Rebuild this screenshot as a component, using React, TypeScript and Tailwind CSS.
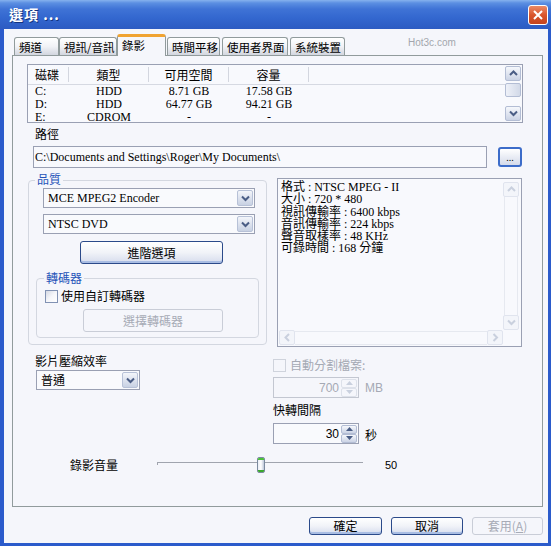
import type { ReactNode } from 'react';

const serif = "font-['Liberation_Serif','Noto_Sans_CJK_TC',serif]";
const cjk = "font-['Noto_Sans_CJK_TC','Liberation_Sans',sans-serif]";
const sans = "font-['Liberation_Sans','Noto_Sans_CJK_TC',sans-serif]";

type Dir = 'up' | 'down' | 'left' | 'right';

function Arrow({ dir, color = '#4a5d85' }: { dir: Dir; color?: string }) {
  const vert = dir === 'up' || dir === 'down';
  const d = {
    up: 'M1 5 L4.5 1.5 L8 5',
    down: 'M1 1.5 L4.5 5 L8 1.5',
    left: 'M5 1 L1.5 4.5 L5 8',
    right: 'M1.5 1 L5 4.5 L1.5 8',
  }[dir];
  return (
    <svg width={vert ? 9 : 7} height={vert ? 7 : 9} viewBox={vert ? '0 0 9 7' : '0 0 7 9'}>
      <path d={d} fill="none" stroke={color} strokeWidth="2" />
    </svg>
  );
}

function ScrollButton({ dir, disabled }: { dir: Dir; disabled?: boolean }) {
  return (
    <div
      className={
        disabled
          ? 'flex h-[15px] w-[16px] items-center justify-center rounded-[2px] border border-[#e0e4ee] bg-[#f3f5fa]'
          : 'flex h-[15px] w-[16px] items-center justify-center rounded-[2px] border border-[#b3bdd4] bg-gradient-to-b from-[#f6f8fc] to-[#cbd3e5]'
      }
    >
      <Arrow dir={dir} color={disabled ? '#c9d0de' : '#4a5d85'} />
    </div>
  );
}

function Combo({ value, width }: { value: string; width: string }) {
  return (
    <div className={`flex h-[20px] items-center border border-[#9aa0b3] bg-[#f9fafd] ${width}`}>
      <span className="flex-1 whitespace-nowrap pl-[4px] leading-[14px]">{value}</span>
      <div className="mr-px flex h-[16px] w-[16px] items-center justify-center rounded-[2px] border border-[#b7c1d7] bg-gradient-to-b from-[#f3f5fa] to-[#c8d1e3]">
        <Arrow dir="down" />
      </div>
    </div>
  );
}

function Spin({ value, disabled }: { value: string; disabled?: boolean }) {
  return (
    <div
      className={
        disabled
          ? 'flex h-[21px] w-[86px] items-center border border-[#c3c7d1] bg-[#f5f6fb]'
          : 'flex h-[21px] w-[86px] items-center border border-[#9aa0b3] bg-[#f9fafd]'
      }
    >
      <span
        className={`flex-1 pr-[2px] text-right text-[12px] leading-[14px] ${sans} ${disabled ? 'text-[#a5a9b4]' : 'text-black'}`}
      >
        {value}
      </span>
      <div className="mr-px flex flex-col">
        <div
          className={
            disabled
              ? 'flex h-[9px] w-[16px] items-center justify-center rounded-[2px] border border-[#dde1ea]'
              : 'flex h-[9px] w-[16px] items-center justify-center rounded-[2px] border border-[#b3bdd4] bg-gradient-to-b from-[#f6f8fc] to-[#cbd3e5]'
          }
        >
          <svg width="7" height="4" viewBox="0 0 7 4">
            <path d="M0 4 L3.5 0 L7 4 Z" fill={disabled ? '#c9d0de' : '#4a5d85'} />
          </svg>
        </div>
        <div
          className={
            disabled
              ? 'flex h-[9px] w-[16px] items-center justify-center rounded-[2px] border border-[#dde1ea]'
              : 'flex h-[9px] w-[16px] items-center justify-center rounded-[2px] border border-[#b3bdd4] bg-gradient-to-b from-[#f6f8fc] to-[#cbd3e5]'
          }
        >
          <svg width="7" height="4" viewBox="0 0 7 4">
            <path d="M0 0 L3.5 4 L7 0 Z" fill={disabled ? '#c9d0de' : '#4a5d85'} />
          </svg>
        </div>
      </div>
    </div>
  );
}

function Button({ children, className, disabled }: { children: ReactNode; className: string; disabled?: boolean }) {
  return (
    <div
      className={
        disabled
          ? `flex items-center justify-center rounded-[3px] border border-[#c9cdd7] ${cjk} text-[12px] text-[#a7abb6] ${className}`
          : `flex items-center justify-center rounded-[3px] border border-[#2b4a8a] bg-gradient-to-b from-[#ffffff] via-[#f1f3f8] to-[#d6dced] shadow-[inset_0_-2px_0_#a9bde3] ${cjk} text-[12px] text-black ${className}`
      }
    >
      {children}
    </div>
  );
}

function Checkbox({ disabled }: { disabled?: boolean }) {
  return (
    <div
      className={
        disabled
          ? 'h-[13px] w-[13px] border border-[#cfd3dc]'
          : 'h-[13px] w-[13px] border border-[#8192b3] bg-gradient-to-br from-[#d5d9e3] via-[#f5f6fa] to-white'
      }
    />
  );
}

const tabs = [
  { label: '頻道', cls: 'w-[45px]' },
  { label: '視訊/音訊', cls: 'w-[58px]' },
  { label: '錄影', cls: 'w-[49px]', active: true },
  { label: '時間平移', cls: 'ml-px w-[53px]' },
  { label: '使用者界面', cls: 'ml-[2px] w-[66px]' },
  { label: '系統裝置', cls: 'ml-[2px] w-[55px]' },
];

const disks = [
  ['C:', 'HDD', '8.71 GB', '17.58 GB'],
  ['D:', 'HDD', '64.77 GB', '94.21 GB'],
  ['E:', 'CDROM', '-', '-'],
];

const info = [
  '格式 : NTSC MPEG - II',
  '大小 : 720 * 480',
  '視訊傳輸率 : 6400 kbps',
  '音訊傳輸率 : 224 kbps',
  '聲音取樣率 : 48 KHz',
  '可錄時間 : 168 分鐘',
];

export default function App() {
  return (
    <div className={`flex h-[546px] w-[551px] flex-col overflow-hidden bg-[#2b5bcb] ${serif} text-[12px] leading-[14px] text-black`}>
      {/* title bar */}
      <div className="flex h-[29px] shrink-0 items-start bg-[linear-gradient(to_bottom,#86b2ee_0px,#5b8fe2_3px,#3f73d6_9px,#3367cf_18px,#2c5bc2_29px)] pl-[9px] pr-[3px]">
        <span className={`mt-[5px] ${cjk} text-[14px] font-bold leading-[18px] tracking-[1px] text-white [text-shadow:1px_1px_0_#12337f]`}>
          選項 ...
        </span>
        <div className="ml-auto mt-[5px] flex h-[20px] w-[20px] items-center justify-center rounded-[3px] border border-white bg-gradient-to-b from-[#ea8a66] via-[#d9552c] to-[#c4431d]">
          <svg width="10" height="10" viewBox="0 0 10 10">
            <path d="M1 1 L9 9 M9 1 L1 9" stroke="white" strokeWidth="2" />
          </svg>
        </div>
      </div>

      {/* client area */}
      <div className="flex flex-1 flex-col border-b-[3px] border-l-[4px] border-r-[3px] border-[#2b5bcb] bg-[#f5f6fb]">
        {/* tab strip */}
        <div className="flex h-[26px] items-end pl-[10px] pt-[5px]">
          {tabs.map((t) =>
            t.active ? (
              <div
                key={t.label}
                className={`relative z-10 -mb-px h-[22px] whitespace-nowrap rounded-t-[3px] border-x border-t-[3px] border-x-[#919b9c] border-t-[#f0a332] bg-[#f5f6fb] pl-[4px] pt-[1px] ${cjk} text-[11.5px] ${t.cls}`}
              >
                {t.label}
              </div>
            ) : (
              <div
                key={t.label}
                className={`h-[18px] overflow-hidden whitespace-nowrap rounded-t-[3px] border-x border-t border-[#919b9c] bg-gradient-to-b from-white via-[#f1f2f6] to-[#d3d6df] pl-[4px] pt-[2px] ${cjk} text-[11.5px] ${t.cls}`}
              >
                {t.label}
              </div>
            ),
          )}
          <span className={`mb-[6px] ml-[63px] self-end ${sans} text-[10px] leading-[12px] text-[#a3a6ad]`}>Hot3c.com</span>
        </div>

        {/* panel */}
        <div className="ml-[8px] flex h-[452px] w-[531px] flex-col border border-[#919b9c] bg-[#f5f6fb] pl-[14px] pt-[8px]">
          {/* disk list */}
          <div className="flex h-[59px] w-[496px] border border-[#9aa0b3] bg-[#f8f9fd]">
            <div className="flex-1">
              <div className={`flex h-[20px] items-center border-b border-[#d6d9e2] ${cjk}`}>
                <div className="w-[40px] pl-[7px]">磁碟</div>
                <div className="h-[15px] w-px bg-[#d3d6df]" />
                <div className="w-[79px] text-center">類型</div>
                <div className="h-[15px] w-px bg-[#d3d6df]" />
                <div className="w-[79px] text-center">可用空間</div>
                <div className="h-[15px] w-px bg-[#d3d6df]" />
                <div className="w-[79px] text-center">容量</div>
                <div className="h-[15px] w-px bg-[#d3d6df]" />
              </div>
              {disks.map((r) => (
                <div key={r[0]} className="flex h-[13px] leading-[13px]">
                  <div className="w-[41px] pl-[7px]">{r[0]}</div>
                  <div className="w-[80px] text-center">{r[1]}</div>
                  <div className="w-[80px] text-center">{r[2]}</div>
                  <div className="w-[80px] text-center">{r[3]}</div>
                </div>
              ))}
            </div>
            <div className="mr-px flex w-[16px] flex-col py-px">
              <ScrollButton dir="up" />
              <div className="mt-[2px] h-[14px] w-[16px] rounded-[2px] border border-[#b3bdd4] bg-gradient-to-r from-[#eef1f8] to-[#d2d9e8]" />
              <div className="flex-1" />
              <ScrollButton dir="down" />
            </div>
          </div>

          {/* path */}
          <div className={`ml-[8px] mt-[4px] ${cjk}`}>路徑</div>
          <div className="mt-[5px] flex items-start">
            <div className="ml-[6px] flex h-[22px] w-[454px] items-center border border-[#9aa0b3] bg-[#f8f9fd] pl-[1px]">
              C:\Documents and Settings\Roger\My Documents\
            </div>
            <div className="ml-[11px] mt-px flex h-[20px] w-[24px] items-end justify-center rounded-[3px] border-2 border-[#3c6cc9] bg-gradient-to-b from-white to-[#d4daea] pb-[2px] text-[10px] leading-[10px]">
              ...
            </div>
          </div>

          {/* lower section */}
          <div className="flex items-start">
            {/* left column */}
            <div className="ml-px flex w-[239px] flex-col">
              <div className="relative mt-[12px] flex h-[165px] flex-col rounded-[4px] border border-[#d3d7e0]">
                <span className={`absolute -top-[9px] left-[6px] bg-[#f5f6fb] px-[2px] ${cjk} text-[#2553b8]`}>品質</span>
                <div className="ml-[14px] mt-[7px]">
                  <Combo value="MCE MPEG2 Encoder" width="w-[212px]" />
                </div>
                <div className="ml-[14px] mt-[6px]">
                  <Combo value="NTSC DVD" width="w-[212px]" />
                </div>
                <Button className="ml-[51px] mt-[7px] h-[23px] w-[143px]">進階選項</Button>
                <div className="relative ml-[7px] mt-[14px] flex h-[60px] w-[223px] flex-col rounded-[4px] border border-[#d3d7e0]">
                  <span className={`absolute -top-[8px] left-[7px] bg-[#f5f6fb] px-[2px] ${cjk} text-[#2553b8]`}>轉碼器</span>
                  <div className="ml-[8px] mt-[10px] flex items-center">
                    <Checkbox />
                    <span className={`ml-[3px] ${cjk}`}>使用自訂轉碼器</span>
                  </div>
                  <Button disabled className="ml-[46px] mt-[6px] h-[23px] w-[140px]">
                    選擇轉碼器
                  </Button>
                </div>
              </div>
              <div className={`ml-[7px] mt-[9px] ${cjk}`}>影片壓縮效率</div>
              <div className="ml-[8px] mt-[2px]">
                <Combo value="普通" width={`w-[104px] ${cjk}`} />
              </div>
            </div>

            {/* right column */}
            <div className="ml-[10px] flex flex-col">
              <div className="mt-[10px] flex h-[169px] w-[245px] flex-col border border-[#9aa0b3] bg-[#f8f9fd]">
                <div className="flex flex-1">
                  <div className="flex-1 pl-[3px] pt-[2px] leading-[12.3px]">
                    {info.map((l) => (
                      <div key={l}>{l}</div>
                    ))}
                  </div>
                  <div className="mr-[2px] flex w-[16px] flex-col pt-[3px]">
                    <ScrollButton dir="up" disabled />
                    <div className="mx-auto w-[14px] flex-1 border-x border-[#e6e9f0]" />
                    <ScrollButton dir="down" disabled />
                  </div>
                </div>
                <div className="flex h-[16px] pl-px">
                  <ScrollButton dir="left" disabled />
                  <div className="my-auto h-[14px] flex-1 border-y border-[#e6e9f0]" />
                  <ScrollButton dir="right" disabled />
                  <div className="w-[18px]" />
                </div>
              </div>

              <div className="-ml-[4px] mt-[11px] flex items-center">
                <Checkbox disabled />
                <span className={`ml-[4px] ${cjk} text-[#a5a9b4]`}>自動分割檔案:</span>
              </div>
              <div className="-ml-[4px] mt-[5px] flex items-center">
                <Spin value="700" disabled />
                <span className={`ml-[6px] ${sans} text-[12px] text-[#a5a9b4]`}>MB</span>
              </div>
              <div className={`-ml-[4px] mt-[5px] ${cjk}`}>快轉間隔</div>
              <div className="-ml-[4px] mt-[6px] flex items-center">
                <Spin value="30" />
                <span className={`ml-[6px] mt-[3px] ${cjk}`}>秒</span>
              </div>
            </div>
          </div>

          {/* volume slider */}
          <div className="mt-[13px] flex h-[16px] items-center pl-[43px]">
            <span className={`${cjk} w-[48px]`}>錄影音量</span>
            <div className="relative ml-[39px] h-[16px] w-[206px]">
              <div className="absolute left-0 top-[5px] h-[3px] w-px bg-[#a0a4ae]" />
              <div className="absolute left-0 right-0 top-[5px] h-px bg-[#a0a4ae]" />
              <div className="absolute left-[100px] top-0 flex h-[16px] w-[8px] flex-col overflow-hidden rounded-[2px] border border-[#7b8a9f] bg-gradient-to-r from-[#e9edf5] via-white to-[#bcc6d8]">
                <div className="h-[2px] bg-[#4cc13a]" />
                <div className="flex-1" />
                <div className="h-[2px] bg-[#3aa82c]" />
              </div>
            </div>
            <span className={`ml-[22px] ${sans} text-[11px]`}>50</span>
          </div>
        </div>

        {/* bottom buttons */}
        <div className="mt-[10px] flex justify-end gap-[9px] pr-[5px]">
          <Button className="h-[18px] w-[73px]">確定</Button>
          <Button className="h-[18px] w-[72px]">取消</Button>
          <Button disabled className="h-[18px] w-[71px]">
            <span>
              套用(<span className="underline">A</span>)
            </span>
          </Button>
        </div>
      </div>
    </div>
  );
}
